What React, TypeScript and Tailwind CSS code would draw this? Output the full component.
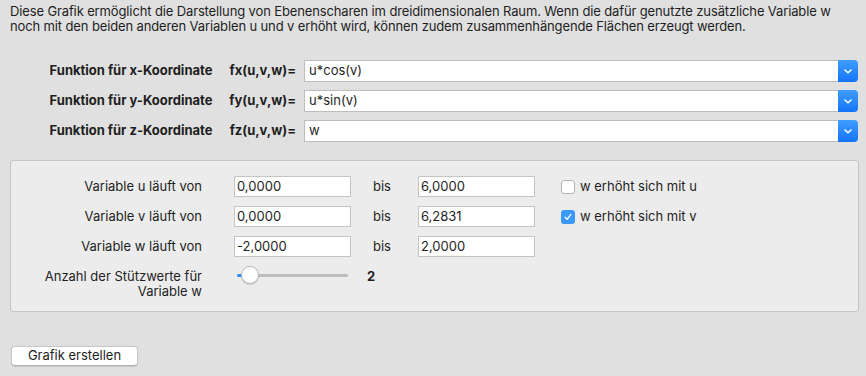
import React from "react";

const font = { fontFamily: "Inter, 'Noto Sans', sans-serif" };

function FuncRow({ label, fn, value }: { label: string; fn: string; value: string }) {
  return (
    <div className="flex items-center h-[22px]">
      <div className="w-[170px] ml-[46px] text-center font-bold">{label}</div>
      <div className="w-[80px] text-right font-bold">{fn}</div>
      <div className="ml-[8px] flex h-[22px] w-[554px]">
        <div className="flex-1 bg-white border border-[#bdbdbd] border-r-0 pl-[4px] flex items-center">{value}</div>
        <div className="w-[20px] h-[22px] rounded-r-[4px] bg-gradient-to-b from-[#3f9dff] to-[#1473f7] flex items-center justify-center">
          <svg width="8" height="5" viewBox="0 0 8 5">
            <path d="M1 1 L4 3.8 L7 1" stroke="white" strokeWidth="1.5" fill="none" strokeLinecap="round" />
          </svg>
        </div>
      </div>
    </div>
  );
}

function Field({ value }: { value: string }) {
  return (
    <div className="w-[117px] h-[21px] bg-white border border-[#c4c4c4] pl-[2px] flex items-center">{value}</div>
  );
}

function VarRow({ v, from, to, check }: { v: string; from: string; to: string; check?: "on" | "off" }) {
  return (
    <div className="flex items-center h-[21px]">
      <div className="w-[191px] text-right">Variable {v} läuft von</div>
      <div className="ml-[32px]">
        <Field value={from} />
      </div>
      <div className="w-[67px] pl-[22px]">bis</div>
      <Field value={to} />
      {check && (
        <div className="ml-[26px] flex items-center">
          {check === "on" ? (
            <div className="w-[14px] h-[14px] rounded-[3px] bg-[#3b99fc] flex items-center justify-center">
              <svg width="10" height="10" viewBox="0 0 10 10">
                <path d="M2.2 5.3 L4.2 7.4 L7.8 2.4" stroke="white" strokeWidth="1.3" fill="none" strokeLinecap="round" strokeLinejoin="round" />
              </svg>
            </div>
          ) : (
            <div className="w-[14px] h-[14px] rounded-[3px] bg-white border border-[#b5b5b5]" />
          )}
          <span className="ml-[5px]">w erhöht sich mit {v}</span>
        </div>
      )}
    </div>
  );
}

export default function App() {
  return (
    <div className="w-[866px] h-[376px] bg-[#e0e0e0] text-[13px] text-[#1e1e1e] overflow-hidden" style={font}>
      <div className="px-[10px] pt-[4px] leading-[15px] tracking-[-0.13px]">
        Diese Grafik ermöglicht die Darstellung von Ebenenscharen im dreidimensionalen Raum. Wenn die dafür genutzte zusätzliche Variable w
        <br />
        noch mit den beiden anderen Variablen u und v erhöht wird, können zudem zusammenhängende Flächen erzeugt werden.
      </div>
      <div className="mt-[26px] flex flex-col gap-[8px]">
        <FuncRow label="Funktion für x-Koordinate" fn="fx(u,v,w)=" value="u*cos(v)" />
        <FuncRow label="Funktion für y-Koordinate" fn="fy(u,v,w)=" value="u*sin(v)" />
        <FuncRow label="Funktion für z-Koordinate" fn="fz(u,v,w)=" value="w" />
      </div>
      <div className="mt-[18px] ml-[10px] w-[849px] h-[152px] bg-[#ececec] border border-[#c6c6c6] rounded-[3px] pt-[15px] flex flex-col gap-[9px]">
        <VarRow v="u" from="0,0000" to="6,0000" check="off" />
        <VarRow v="v" from="0,0000" to="6,2831" check="on" />
        <VarRow v="w" from="-2,0000" to="2,0000" />
        <div className="flex items-start mt-[3px]">
          <div className="w-[191px] text-right leading-[15px]">
            Anzahl der Stützwerte für
            <br />
            Variable w
          </div>
          <div className="ml-[32px] w-[117px] h-[15px] relative">
            <div className="absolute left-[3px] right-[3px] top-[5px] h-[3px] rounded-full bg-[#bdbdbd]" />
            <div className="absolute left-[3px] w-[10px] top-[5px] h-[3px] rounded-full bg-[#2f8cf8]" />
            <div className="absolute left-[7px] top-[-3px] w-[18px] h-[18px] rounded-full bg-white border border-[#b8b8b8] shadow-[0_1px_1px_rgba(0,0,0,0.15)]" />
          </div>
          <div className="ml-[16px] font-bold leading-[15px]">2</div>
        </div>
      </div>
      <div className="mt-[34px] ml-[11px] w-[127px] h-[20px] bg-white border border-[#c8c8c8] border-b-[#b0b0b0] rounded-[4px] flex items-center justify-center shadow-[0_0.5px_1px_rgba(0,0,0,0.1)]">
        Grafik erstellen
      </div>
    </div>
  );
}
